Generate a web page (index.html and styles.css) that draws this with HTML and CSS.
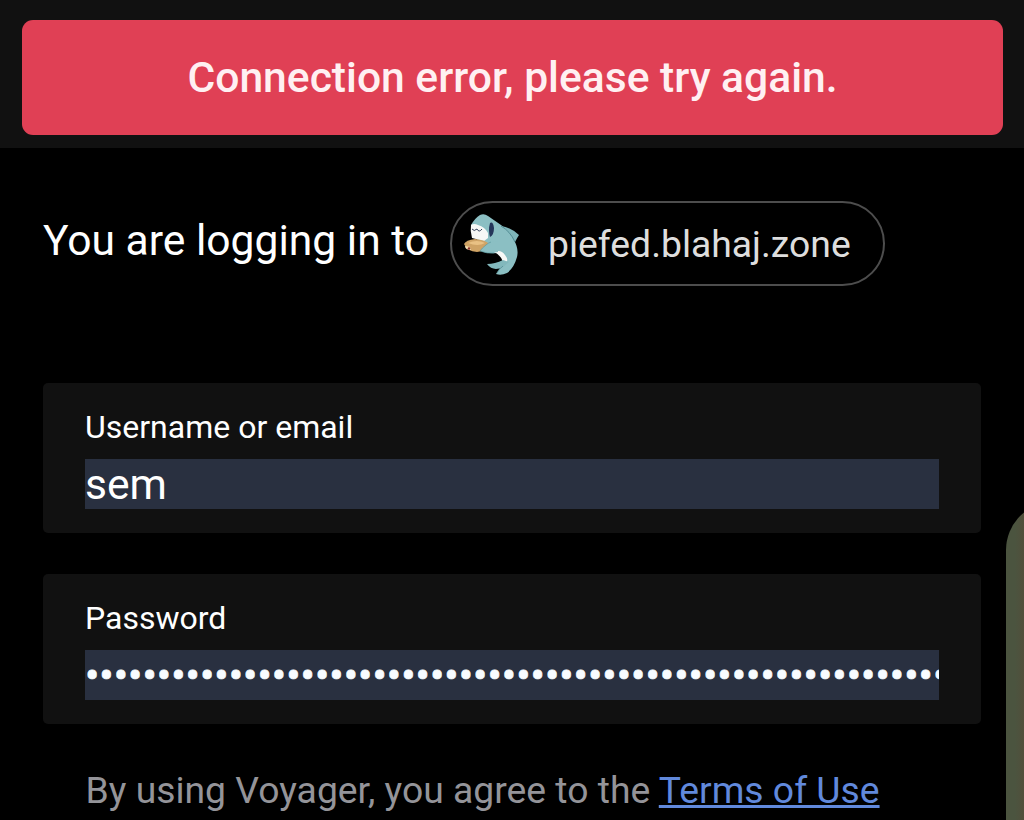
FILE: index.html
```
<!DOCTYPE html>
<html lang="en">
<head>
	<meta charset="UTF-8">
	<meta name="viewport" content="width=device-width, initial-scale=1.0">
	<title>Voyager - Log in</title>

	<link rel="stylesheet" href="styles.css">
</head>
<body>

	<header class="toolbar">
		<div class="toast" role="alert"><span class="toast-text">Connection error, please try again.</span></div>
	</header>

	<main class="login">
		<div class="instance">
			<span class="instance-text">You are logging in to</span>
			<div class="chip">
				<svg class="shark" viewBox="0 0 90 90" aria-hidden="true">
					<!-- back fin and tail -->
					<path fill="#7fb6ba" d="M51 26 Q60 27 69 35 Q67 38 65 42 L56 36Z"/>
					<!-- body -->
					<path fill="#8bbfc3" d="M21 25 Q25 18 30 15 Q34 13 38 16 L51 25 Q60 31 64 40 Q69 49 67 57 Q64 68 57 73 Q51 76 46 74 Q49 69 53 64 Q54 57 47 53 Q36 54 31 51 L26 36Z"/>
					<path fill="#f7f8f6" d="M21 25 Q24 23 28 25 Q35 27 38 33 L38 38 L34 41 L22 38 Q20 31 21 25Z"/>
					<path fill="#f7f8f6" d="M44 52 Q51 49 55 55 Q59 60 56 63 L53 63 Q52 56 44 52Z"/>
					<path fill="#82b8bc" d="M37 64 Q45 64 53 60 L59 62 L53 67 Q43 72 37 64Z"/>
					<path fill="#25365a" d="M40 23 Q43 21 44 28 Q44 35 40 37 Q38 30 40 23Z"/>
					<path fill="none" stroke="#35415b" stroke-width="1" d="M22 29 Q24 32 27 29 Q29 33 32 29"/>
					<path fill="none" stroke="#447f88" stroke-width=".8" d="M51 26 Q60 31 65 42"/>
					<path fill="none" stroke="#447f88" stroke-width=".6" d="M47 73 Q49 69 53 66"/>
					<!-- bread and fin holding it -->
					<path fill="#cfa365" d="M14 44 Q16 40 25 39 Q36 40 39 44 Q36 51 27 52 Q17 51 14 44Z"/>
					<path fill="#e9c184" d="M18 43 Q27 39 35 43 Q28 47 18 43Z"/>
					<path fill="#f7e2b4" d="M15 46 L20 47 L21 50 Q15 50 15 46Z"/>
					<circle fill="#8b3028" cx="19" cy="48.5" r="1.3"/>
					<path fill="#8bbfc3" d="M48 41 Q40 41 36 45 Q32 48 30 51 Q39 54 48 52Z"/>
					<path fill="none" stroke="#56949a" stroke-width=".6" d="M41 42 Q38 43 36 45 Q32 48 30 51 Q38 54 44 53"/>
				</svg>
				<span class="chip-text">piefed.blahaj.zone</span>
			</div>
		</div>

		<form class="form">
			<div class="field">
				<span class="label">Username or email</span>
				<div class="value">sem</div>
			</div>
			<div class="field">
				<span class="label">Password</span>
				<div class="value password">••••••••••••••••••••••••••••••••••••••••••••••••••••••••••••</div>
			</div>
		</form>

		<p class="terms">By using Voyager, you agree to the <a href="#">Terms of Use</a></p>
	</main>

	<div class="edge-handle"></div>

</body>
</html>
```
FILE: styles.css
```
* {
	margin: 0;
	padding: 0;
	box-sizing: border-box;
}

body {
	height: 820px;
	overflow: hidden;
	background-color: #000;
	color: #fff;
	font-family: Roboto, "Liberation Sans", sans-serif;
}

.toolbar {
	height: 148px;
	padding: 20px 21px 0 22px;
	background-color: #111;
}

.toast {
	display: flex;
	align-items: center;
	justify-content: center;
	height: 114.5px;
	border-radius: 11px;
	background-color: #e04055;
	color: #fff0f2;
	font-size: 42.6px;
	font-weight: 500;
	white-space: nowrap;
}

.login {
	padding: 53px 43px 0;
}

.instance {
	display: flex;
	height: 85px;
	gap: 21px;
}

.instance-text {
	width: 386px;
	padding-top: 15px;
	font-size: 42.6px;
	line-height: 49px;
	white-space: nowrap;
}

.chip {
	display: flex;
	align-items: center;
	width: 435px;
	height: 85px;
	border: 2px solid #4d4d4d;
	border-radius: 43px;
	color: #dedede;
	font-size: 37.3px;
	white-space: nowrap;
}

.shark {
	flex: none;
	width: 90px;
	height: 90px;
	margin: 3px 0 0 -2px;
}

.chip-text {
	margin-left: 8px;
}

.form {
	display: flex;
	flex-direction: column;
	gap: 41px;
	margin-top: 97px;
}

.field {
	height: 150px;
	padding: 27px 42px 0;
	border-radius: 5px;
	background-color: #111;
}

.label {
	display: block;
	height: 49px;
	font-size: 32px;
	line-height: 34px;
}

.value {
	height: 50px;
	overflow: hidden;
	background-color: #293040;
	font-size: 42.6px;
	line-height: 51px;
	white-space: nowrap;
}

.password {
	color: #f8fcff;
	line-height: 50px;
	-webkit-text-stroke: .7px #f8fcff;
}

.terms {
	margin: 44px 0 0 42.5px;
	color: #949499;
	font-size: 37.3px;
	line-height: 44px;
	white-space: nowrap;
}

.terms a {
	color: #6189dc;
	text-decoration-thickness: 3px;
}

/* system edge panel, sits over the page and runs off the screen */
.edge-handle {
	position: absolute;
	top: 502px;
	right: 0;
	width: 18px;
	height: 318px;
	overflow: hidden;
}

.edge-handle::before {
	content: "";
	display: block;
	width: 96px;
	height: 318px;
	border-radius: 48px 48px 0 0;
	background: linear-gradient(to right, #4b543f 0, #4b543f 9px, #514f3b 18px);
}
```
